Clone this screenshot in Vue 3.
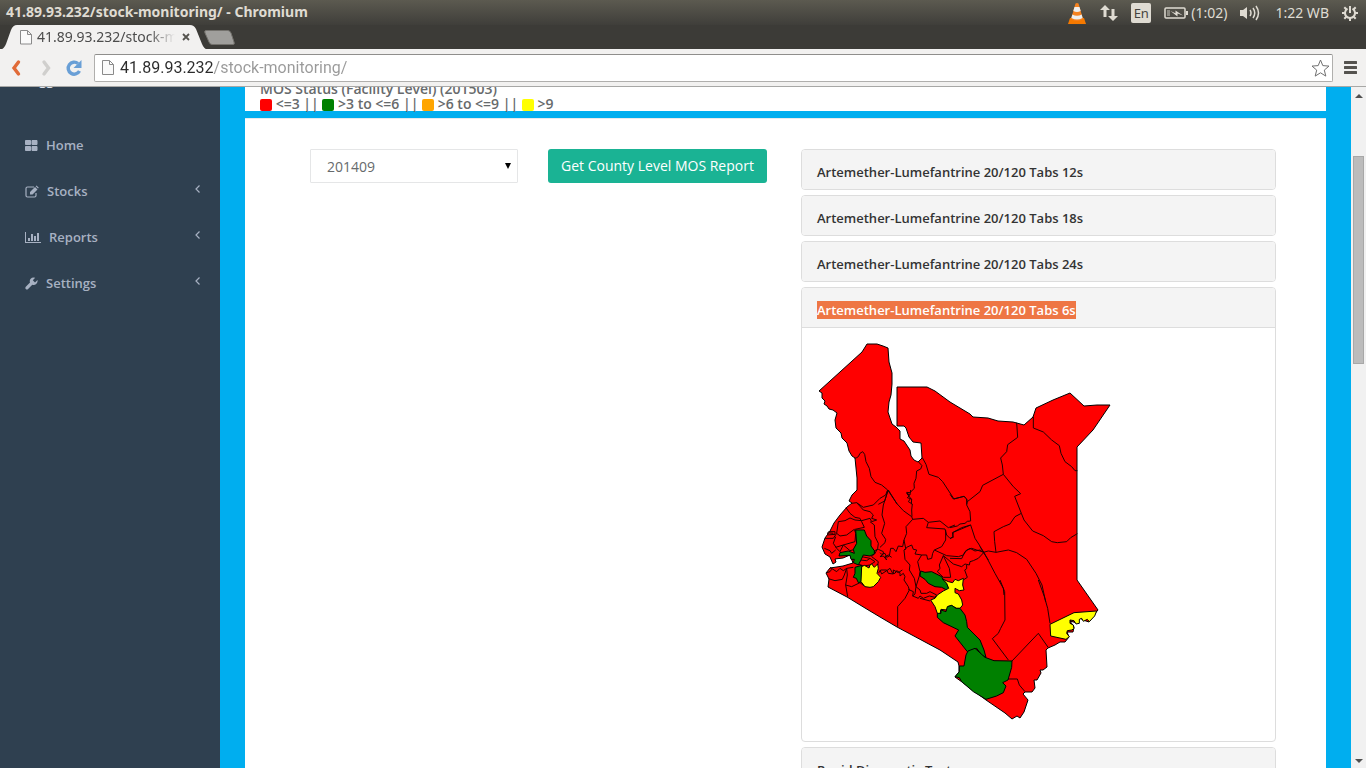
<script setup>
import { ref } from 'vue'

const address = ref('41.89.93.232/stock-monitoring/')
const period = ref('201409')

const menu = [
  { label: 'Home', icon: 'grid', width: 13, children: false },
  { label: 'Stocks', icon: 'edit', width: 14, children: true },
  { label: 'Reports', icon: 'chart', width: 16, children: true },
  { label: 'Settings', icon: 'wrench', width: 13, children: true },
]

const legend = [
  { tone: 'low', text: '<=3' },
  { tone: 'good', text: '>3 to <=6' },
  { tone: 'high', text: '>6 to <=9' },
  { tone: 'over', text: '>9' },
]

const products = [
  { name: 'Artemether-Lumefantrine 20/120 Tabs 12s', open: false },
  { name: 'Artemether-Lumefantrine 20/120 Tabs 18s', open: false },
  { name: 'Artemether-Lumefantrine 20/120 Tabs 24s', open: false },
  { name: 'Artemether-Lumefantrine 20/120 Tabs 6s', open: true },
  { name: 'Rapid Diagnostic Tests', open: false },
]

const country =
  '867,344 877,344 883,346 888,348 889,362 892,373 892,384 891,395 889,402 888,412 892,424 896,427 900,431 900,439 904,441 910,450 911,456 914,460 918,462 922,458 921,443 913,442 909,437 906,428 904,426 897,426 897,387 927,387 935,391 950,402 970,414 973,417 988,418 998,421 1013,422 1024,425 1033,417 1036,408 1053,400 1070,393 1084,406 1097,405 1110,405 1093,430 1077,447 1077,580 1098,610 1092,617 1089,622 1083,620 1080,618 1077,623 1070,621 1074,627 1073,632 1067,632 1069,637 1065,642 1060,642 1055,645 1048,648 1046,650 1047,667 1043,670 1040,670 1041,673 1037,680 1034,680 1035,688 1032,692 1025,692 1023,694 1028,700 1024,712 1020,718 1017,716 1012,719 1005,713 986,700 962,682 955,677 959,672 959,666 958,662 940,650 897,627 880,617 865,608 847,597 828,587 829,579 826,573 830,568 843,566 853,563 850,555 843,558 835,559 836,562 833,564 830,557 825,554 822,547 825,538 830,531 834,523 840,515 847,507 852,503 849,501 852,495 857,490 857,478 855,458 852,456 849,451 847,443 842,438 841,433 836,428 835,420 837,413 833,410 829,409 827,406 824,404 825,401 822,398 822,393 819,391 862,352'

// Each sheet holds borders traced at three units to the pixel from its own origin.
const sheets = [
  {
    x: 810,
    y: 335,
    lines: [
      '134,370 140,368 145,365 150,355 158,350 164,358 168,380 178,400 183,425 195,442 215,450 233,465 262,508',
      '233,465 228,485 224,498 205,508',
      '325,380 336,392 332,402 320,408 318,430 312,445 313,460 300,473 290,472 298,482 292,488 305,492 304,508',
      '337,368 348,388 357,418 385,427 398,440 432,492 462,484 470,492 470,508',
    ],
  },
  {
    x: 950,
    y: 370,
    lines: [
      '200,158 203,202 173,224 170,245 152,264 157,285 160,313 98,346 90,365 52,395',
      '0,373 10,387 42,379 50,387 52,395 50,405 60,425 62,453 52,454 45,460 30,462 22,468 0,473',
      '250,140 250,174 280,186 305,210 328,227 333,250 345,275 365,290 375,302 382,302',
      '160,313 190,350 212,371 194,379 214,430 222,450 248,483 280,497 305,515 322,518 350,515 362,503 382,491',
      '214,430 195,440 180,462 160,470 132,485 134,515 138,547',
      '62,465 10,487 8,500 0,507',
      '62,465 75,505 88,525 100,547 115,570',
      '0,565 35,566 45,545 60,535 75,543 90,540 100,547 115,543 138,547 175,540 200,548 230,568 258,610 276,645 287,695',
    ],
  },
  {
    x: 880,
    y: 490,
    lines: [
      '25,0 50,40 70,62 95,80 98,88 130,85 145,97 180,93 205,113 225,105',
      '92,0 90,15 80,10 92,25 85,35 97,42 95,60 96,80',
      '140,113 145,97',
      '140,113 195,117 200,135 210,145 220,142 217,128 245,113 272,105',
      '300,170 312,187 345,250 370,295 372,315',
      '197,120 197,150 185,170 163,180',
      '98,88 78,110 80,130 72,150 77,175 72,180 75,208 90,225 88,240 103,265 108,290 105,312 98,318',
      '72,150 68,170 55,168 48,185 40,175 32,175 28,198 20,202 15,190 5,193 0,188',
      '25,0 10,45 6,75 14,100 5,130 17,148 15,158 0,172',
      '75,180 80,172 95,165 100,178 110,180 105,192 125,195 140,195 143,208 155,205 158,190 163,180 200,197 235,200 250,195 260,180 275,175 290,180 312,187',
      '312,187 295,205 280,212 270,215 268,225 255,222 245,230 220,222 190,197',
      '190,197 178,225 180,235 172,245 190,262 212,262 208,235 190,197',
      '260,225 260,236 254,240 262,262 250,270',
      '125,195 113,215 120,245 118,258 108,290 120,300 123,310 140,310 150,305 170,315 165,322 148,318 130,325 120,318 115,325 98,318 100,305 85,298',
      '120,325 150,333',
      '0,240 5,252 20,242 30,235 38,250 45,250 50,242 60,248 60,258 70,250 75,260 72,270 85,290 88,300 75,325 53,350 53,410',
    ],
  },
  {
    x: 815,
    y: 490,
    lines: [
      '218,0 212,15 195,25 175,45 145,52 125,38 110,40',
      '93,53 105,70 120,82 135,85 140,95 148,112 120,118',
      '125,38 145,60 165,65 175,75 170,85 185,90 170,95 165,85 140,92 120,90 105,84 90,92 70,95',
      '165,95 178,105 180,140 190,160 188,175 180,190',
      '70,95 65,130 75,138 95,135 118,118 122,130 120,155 85,165 62,172',
      '40,125 60,125 60,133 38,135 38,128 55,130',
      '65,130 55,145 30,145',
      '62,140 55,160 65,175 75,185 85,165 105,182 120,178',
      '28,175 45,182 50,190 62,180',
      '45,232 65,245 75,235 85,242 95,235 115,232',
      '95,235 88,255 82,268 60,272 40,266',
      '95,235 97,255 92,285 98,320',
      '92,285 110,290 135,278 150,290',
      '140,200 165,205 180,215 165,225 145,228 130,222',
      '135,210 155,212 165,205',
      '180,190 178,182 190,178 205,185 205,192 195,200 205,198 215,210 210,200 220,195 230,202',
      '180,190 170,200 190,215 188,225',
      '190,250 197,240 215,240 220,250 235,252 235,240 250,248 262,240',
      '35,248 45,245 50,238',
    ],
  },
  {
    x: 880,
    y: 580,
    lines: [
      '360,0 374,35 375,120 362,145 355,160 337,176 385,240',
      '475,0 493,50 503,85 510,130',
      '396,243 475,160 505,203',
      '384,297 412,297 418,315 435,335',
    ],
  },
]

const shaded = [
  {
    x: 880,
    y: 490,
    areas: [
      { tone: 'good', points: '122,243 135,247 155,245 185,260 190,270 200,280 206,295 200,300 185,292 165,290 145,280 135,268 120,258' },
      { tone: 'over', points: '188,267 205,275 218,278 225,268 235,272 250,265 248,285 252,300 238,302 225,295 225,308 235,312 245,330 248,345 240,355 230,355 215,347 205,349 200,360 183,358 180,372 172,370 165,350 152,330 165,325 172,315 190,303 206,295 200,280' },
    ],
  },
  {
    x: 880,
    y: 580,
    areas: [
      { tone: 'good', points: '172,100 183,100 183,90 198,95 202,80 215,76 228,85 240,85 255,105 260,125 262,142 285,165 300,180 312,210 318,232 305,225 290,205 262,215 225,168 236,150 190,128 172,112' },
      { tone: 'good', points: '285,205 315,232 342,242 396,243 395,262 384,300 368,308 378,318 370,338 350,348 318,358 280,335 245,305 238,293 225,290 238,275 238,258 252,258 258,225 264,213' },
      { tone: 'over', points: '650,93 644,108 628,125 622,118 610,124 605,115 598,118 598,130 588,132 582,122 570,120 570,130 580,135 582,146 575,150 562,152 560,160 568,170 558,178 512,168 510,133 582,98' },
    ],
  },
  {
    x: 815,
    y: 490,
    areas: [
      { tone: 'good', points: '122,120 148,120 155,138 168,152 168,168 178,182 178,192 165,198 145,195 138,210 130,225 115,218 118,208 108,208 105,196 72,198 75,188 100,183 118,190 115,178 125,160' },
      { tone: 'good', points: '120,232 140,226 140,275 130,278 124,265 115,262 120,250' },
      { tone: 'over', points: '140,230 148,226 162,234 165,225 170,222 178,232 188,222 190,235 186,250 197,262 190,275 175,290 165,292 150,290 138,275' },
    ],
  },
]
</script>

<template>
  <div class="screen">
    <header class="titlebar">
      <span class="window-title">41.89.93.232/stock-monitoring/ - Chromium</span>
      <div class="tray">
        <svg class="cone" width="20" height="22" viewBox="0 0 20 22" aria-hidden="true">
          <path d="M3 16h14l2 6H1z" fill="#f57900" />
          <path d="M8.500 1.500Q10 .5 11.500 1.500L16 17Q10 21 4 17z" fill="#f58220" />
          <path d="M7.500 5h5l1.200 4Q10 11 6.300 9zM5.300 12.500Q10 15 14.700 12.500L15.600 16Q10 19 4.400 16z" fill="#eee" />
        </svg>
        <svg class="net" width="18" height="18" viewBox="0 0 18 18" aria-hidden="true">
          <path d="M5 1L0 6h3.500v7h3V6H10zM13 17l5-5h-3.500V5h-3v7H8z" fill="#dfdbd2" />
        </svg>
        <span class="lang">En</span>
        <svg class="battery" width="24" height="12" viewBox="0 0 24 12" aria-hidden="true">
          <rect x="1" y="1" width="20" height="10" rx="1" fill="none" stroke="#dfdbd2" stroke-width="1.500" />
          <path d="M22 4h2v4h-2z" fill="#dfdbd2" />
          <path d="M3 3h3v6H3z" fill="#8b8981" />
          <path d="M6.500 4l5 2.200V3.500L19 8.500l-5.500-2v3z" fill="#dfdbd2" />
        </svg>
        <span class="remaining">(1:02)</span>
        <svg class="sound" width="21" height="18" viewBox="0 0 21 18" aria-hidden="true">
          <path d="M1 6h3l4-3v12l-4-3H1z" fill="#dfdbd2" />
          <path d="M11 6q2 3 0 6M14 4q3.500 5 0 10M17 2q5 7 0 14" fill="none" stroke="#dfdbd2" stroke-width="1.500" />
        </svg>
        <span class="clock">1:22 WB</span>
        <svg class="gear" width="16" height="16" viewBox="0 0 16 16" aria-hidden="true">
          <path d="M5.500 3.700a5 5 0 1 0 5 0M8 1v7" fill="none" stroke="#dfdbd2" stroke-width="2" />
          <path d="M8 13v3M0 8h3M13 8h3M2.300 2.300l2 2M13.700 2.300l-2 2M2.300 13.700l2-2M13.700 13.700l-2-2" stroke="#dfdbd2" stroke-width="2" />
        </svg>
      </div>
    </header>

    <nav class="tabs" aria-label="Tabs">
      <div class="tab">
        <svg class="tab-shape" viewBox="0 0 208 25" width="208" height="25" aria-hidden="true">
          <path d="M0 25Q4 24 6 19L11 5Q13 0 17 0H190Q194 0 196 4L202 19Q204 24 208 25z" fill="#f2f1f0" />
        </svg>
        <svg class="page-icon" width="12" height="15" viewBox="0 0 12 15" aria-hidden="true">
          <path d="M.5.5h7l4 4v9.500H.5zM7.500.5v4h4" fill="#fafafa" stroke="#8a8a8a" />
        </svg>
        <span class="tab-title">41.89.93.232/stock-m</span>
        <button class="close" type="button" aria-label="Close tab">
          <svg width="8" height="8" viewBox="0 0 8 8"><path d="M1 1l6 6M7 1L1 7" stroke="#55534e" stroke-width="1.800" /></svg>
        </button>
      </div>
      <button class="new-tab" type="button" aria-label="New tab">
        <svg width="31" height="15" viewBox="0 0 31 15"><path d="M2 .5h22q2 0 3 2.500l3 9q1 2.500-1 2.500H8q-2 0-3-2.500L1 3Q0 .5 2 .5z" fill="#a09f9c" stroke="#74726d" /></svg>
      </button>
    </nav>

    <div class="toolbar">
      <button class="tool" type="button" aria-label="Back">
        <svg width="12" height="18" viewBox="0 0 12 18"><path d="M8.500 3L4 9l4.500 6" fill="none" stroke="#e16b38" stroke-width="3.400" stroke-linecap="round" /></svg>
      </button>
      <button class="tool" type="button" aria-label="Forward">
        <svg width="12" height="18" viewBox="0 0 12 18"><path d="M4 3l4.500 6L4 15" fill="none" stroke="#d0cfcd" stroke-width="3.400" stroke-linecap="round" /></svg>
      </button>
      <button class="tool" type="button" aria-label="Reload">
        <svg width="18" height="18" viewBox="0 0 18 18">
          <path d="M13 4.500A6 6 0 1 0 14.500 12" fill="none" stroke="#699fd6" stroke-width="3.400" />
          <path d="M16.500 1v8H8.500z" fill="#699fd6" />
        </svg>
      </button>
      <div class="omnibox">
        <svg class="page-icon" width="12" height="15" viewBox="0 0 12 15" aria-hidden="true">
          <path d="M.5.5h7l4 4v10H.5zM7.500.5v4h4" fill="#fafafa" stroke="#8a8a8a" />
        </svg>
        <input v-model="address" class="address" type="text" aria-label="Address" spellcheck="false" />
        <button class="star" type="button" aria-label="Bookmark">
          <svg width="19" height="18" viewBox="0 0 19 18"><path d="M9.500 1l2.300 5.600 6.200.5-4.700 4 1.500 6-5.300-3.300-5.300 3.300 1.500-6-4.700-4 6.200-.5z" fill="none" stroke="#6f6f6f" stroke-linejoin="round" /></svg>
        </button>
      </div>
      <button class="burger" type="button" aria-label="Menu">
        <svg width="13" height="13" viewBox="0 0 13 13"><path d="M1 1.500h11M1 6.500h11M1 11.500h11" stroke="#55534f" stroke-width="3" stroke-linecap="round" /></svg>
      </button>
    </div>

    <div class="page">
      <aside class="sidebar">
        <div class="profile"><span>gg</span></div>
        <nav aria-label="Main">
          <a v-for="item in menu" :key="item.label" class="item" href="#">
            <svg :width="item.width" height="13" :viewBox="`0 0 ${item.width} 13`" aria-hidden="true">
              <path v-if="item.icon === 'grid'" d="M.5 1.500h5v4h-5zM7 1.500h5v4H7zM.5 7.500h5v4h-5zM7 7.500h5v4H7z" fill="currentColor" stroke="currentColor" stroke-linejoin="round" />
              <template v-else-if="item.icon === 'edit'">
                <path d="M9 2H2.500Q1 2 1 3.500v7Q1 12 2.500 12h7q1.500 0 1.500-1.500V8" fill="none" stroke="currentColor" stroke-width="1.200" />
                <path d="M5 9.500V7l5-5 2.500 2.500-5 5zM10.700 1.300l.8-.8 2.300 2.300-.8.8z" fill="currentColor" />
              </template>
              <path v-else-if="item.icon === 'chart'" d="M0 1h1v10h15v1H0zM3 7h2v3H3zM6 3h2v7H6zM9 5h2v5H9zM12 2h2v8h-2z" fill="currentColor" />
              <path v-else d="M12.500 3L10 5.500 7.800 3.300 10.200.8Q7.500-.2 5.700 1.700 4.300 3.200 5 5.500L.8 9.700Q-.2 11 .8 12t2.300 0L7.300 7.800q2.200.8 3.900-.8Q13 5.200 12.500 3z" fill="currentColor" />
            </svg>
            <span class="item-label">{{ item.label }}</span>
            <svg v-if="item.children" class="chevron" width="5" height="8" viewBox="0 0 5 8" aria-hidden="true"><path d="M4.500.5L1 4l3.500 3.500" fill="none" stroke="currentColor" stroke-width="1.200" /></svg>
          </a>
        </nav>
      </aside>

      <main class="content">
        <section class="status">
          <h1>MOS Status (Facility Level) (201503)</h1>
          <p class="legend">
            <template v-for="(entry, i) in legend" :key="entry.tone"><template v-if="i"> || </template><span :class="['swatch', entry.tone]"></span> {{ entry.text }}</template>
          </p>
        </section>

        <section class="report">
          <div class="picker">
            <select v-model="period" aria-label="Period">
              <option>201409</option>
            </select>
            <svg class="arrow" width="6" height="6" viewBox="0 0 6 6" aria-hidden="true"><path d="M0 0h6L3 6z" fill="#000" /></svg>
          </div>
          <div>
            <button class="submit" type="button">Get County Level MOS Report</button>
          </div>
          <div class="panels">
            <article v-for="product in products" :key="product.name" class="panel">
              <h2 :class="{ opened: product.open }"><a href="#"><span :class="{ selected: product.open }">{{ product.name }}</span></a></h2>
              <div v-if="product.open" class="map">
                <svg viewBox="816 343 300 380" width="300" height="380" role="img" aria-label="County map">
                  <polygon class="county low" :points="country" />
                  <g v-for="(sheet, s) in sheets" :key="s" :transform="`translate(${sheet.x} ${sheet.y}) scale(0.33333)`">
                    <polyline v-for="line in sheet.lines" :key="line" class="border" :points="line" />
                  </g>
                  <g v-for="(sheet, s) in shaded" :key="'a' + s" :transform="`translate(${sheet.x} ${sheet.y}) scale(0.33333)`">
                    <polygon v-for="area in sheet.areas" :key="area.points" :class="['county', 'traced', area.tone]" :points="area.points" />
                  </g>
                </svg>
              </div>
            </article>
          </div>
        </section>
      </main>

      <div class="scrollbar" aria-hidden="true">
        <svg width="8" height="4" viewBox="0 0 8 4"><path d="M0 4h8L4 0z" fill="#505050" /></svg>
        <div class="thumb"></div>
        <svg class="down" width="8" height="4" viewBox="0 0 8 4"><path d="M0 0h8L4 4z" fill="#505050" /></svg>
      </div>
    </div>
  </div>
</template>

<style>
html,
body {
  overflow: hidden;
}
</style>

<style scoped>
.screen {
  display: flex;
  flex-direction: column;
  height: 100vh;
  overflow: hidden;
  background: #3c3b37;
  color: #676a6c;
  font-family: "Open Sans", "Noto Sans", sans-serif;
}
.screen * {
  box-sizing: border-box;
}
button {
  display: block;
  padding: 0;
  border: 0;
  background: none;
  font-family: inherit;
}
svg {
  display: block;
  flex: none;
}
a {
  color: inherit;
  text-decoration: none;
}

.titlebar {
  display: flex;
  flex: none;
  justify-content: space-between;
  height: 25px;
  padding: 0 8px 0 6px;
  background: linear-gradient(#5c5a50, #3f3e3a);
  color: #dfdbd2;
  font-family: "Noto Sans", sans-serif;
  font-size: 14px;
  line-height: 24px;
}
.window-title {
  font-weight: 700;
}
.tray {
  display: flex;
  align-items: center;
}
.net {
  margin-left: 13px;
}
.lang {
  width: 20px;
  height: 20px;
  margin-left: 13px;
  border-radius: 2px;
  background: #dfdbd2;
  color: #45433e;
  font-size: 13px;
  line-height: 20px;
  text-align: center;
}
.battery {
  margin-left: 13px;
}
.remaining {
  margin-left: 3px;
}
.sound {
  margin-left: 12px;
}
.clock {
  margin-left: 15px;
}
.gear {
  margin-left: 13px;
}

.tabs {
  display: flex;
  flex: none;
  height: 24px;
}
.tab {
  position: relative;
  display: flex;
  align-items: center;
  width: 208px;
  padding-left: 20px;
  color: #4c4c4c;
}
.tab-shape {
  position: absolute;
  top: 0;
  left: 0;
}
.tab .page-icon,
.tab-title,
.close {
  position: relative;
}
.tab-title {
  width: 138px;
  margin-left: 5px;
  overflow: hidden;
  font-family: "Noto Sans", sans-serif;
  font-size: 14px;
  line-height: 20px;
  white-space: nowrap;
  mask-image: linear-gradient(to right, #000 112px, transparent);
}
.close {
  margin-left: 7px;
}
.new-tab {
  margin: 5px 0 0 -4px;
  align-self: flex-start;
}

.toolbar {
  display: flex;
  flex: none;
  align-items: center;
  height: 38px;
  padding: 0 9px;
  border-bottom: 1px solid #a8a8a6;
  background: #f2f1f0;
}
.tool {
  width: 30px;
}
.tool:first-child {
  margin-left: 1px;
}
.tool:nth-child(3) {
  width: 25px;
  margin-left: -5px;
}
.omnibox {
  display: flex;
  flex: 1;
  align-items: center;
  height: 28px;
  margin-left: 4px;
  padding: 0 2px 0 7px;
  border: 1px solid #b0afad;
  border-top-color: #8f8e8c;
  border-radius: 2px;
  background: #fff;
}
.address {
  flex: 1;
  min-width: 0;
  height: 24px;
  margin-left: 6px;
  padding: 0;
  border: 0;
  outline: 0;
  background: linear-gradient(to right, #2b2b2b 93px, #999 93px);
  background-clip: text;
  -webkit-text-fill-color: transparent;
  font-family: Roboto, "Noto Sans", sans-serif;
  font-size: 16px;
  line-height: 24px;
}
.burger {
  margin-left: 11px;
}

.page {
  display: flex;
  flex: 1;
  min-height: 0;
  overflow: hidden;
  background: #00aeef;
}
.sidebar {
  flex: none;
  width: 220px;
  background: #2f4050;
  color: #a7b1c2;
  font-size: 13px;
  font-weight: 600;
}
.profile {
  height: 35px;
  padding-left: 39px;
  overflow: hidden;
  color: #dfe4ed;
}
.profile span {
  display: block;
  margin-top: -14px;
  line-height: 14px;
}
.item {
  display: flex;
  align-items: center;
  height: 46px;
  padding: 0 20px 0 25px;
}
.item-label {
  flex: 1;
  margin-left: 8px;
}
.chevron {
  margin-bottom: 4px;
}

.content {
  flex: 1;
  min-width: 0;
  margin: 0 25px;
}
.status {
  display: flow-root;
  height: 24px;
  padding: 0 15px;
  background: #fff;
  font-size: 14px;
  font-weight: 600;
  line-height: 15px;
  white-space: nowrap;
}
.status h1 {
  margin: -6px 0 0;
  font-size: 14px;
  font-weight: 600;
}
.legend {
  margin: 0;
}
.swatch {
  display: inline-block;
  width: 12px;
  height: 12px;
  border-radius: 2px;
  vertical-align: -2px;
}
.swatch.low {
  background: #f00;
}
.swatch.good {
  background: #008000;
}
.swatch.high {
  background: #ffa500;
}
.swatch.over {
  background: #ff0;
}
.report {
  display: grid;
  grid-template-columns: 208fr 223fr 475fr;
  gap: 30px;
  margin-top: 7px;
  padding: 30px 50px 30px 65px;
  border-top: 1px solid #e7eaec;
  background: #fff;
}
.picker {
  position: relative;
  height: 34px;
}
.picker select {
  width: 100%;
  height: 34px;
  padding: 0 16px;
  border: 1px solid #e5e6e7;
  border-radius: 1px;
  appearance: none;
  background: #fff;
  color: #676a6c;
  font-family: inherit;
  font-size: 14px;
}
.arrow {
  position: absolute;
  top: 14px;
  right: 7px;
}
.submit {
  height: 34px;
  padding: 0 13px 2px;
  border-radius: 3px;
  background: #1ab394;
  color: #fff;
  font-size: 14px;
  white-space: nowrap;
}
.panels {
  display: flex;
  flex-direction: column;
  gap: 5px;
}
.panel {
  border: 1px solid #ddd;
  border-radius: 4px;
  overflow: hidden;
}
.panel h2 {
  margin: 0;
  padding: 13px 15px 8px;
  background: #f4f4f4;
  color: #333;
  font-size: 13px;
  font-weight: 600;
  line-height: 18px;
}
.panel h2.opened {
  border-bottom: 1px solid #ddd;
}
.selected {
  display: inline-block;
  background: #ee7644;
  color: #fff;
}
.map {
  padding: 15px 14px 18px;
}
.county {
  stroke: #000;
  stroke-width: 1;
  stroke-linejoin: round;
}
.county.traced {
  stroke-width: 3;
}
.county.low {
  fill: #f00;
}
.county.good {
  fill: #008000;
}
.county.over {
  fill: #ff0;
}
.border {
  fill: none;
  stroke: #200;
  stroke-width: 3;
  stroke-linejoin: round;
}

.scrollbar {
  display: flex;
  flex: none;
  flex-direction: column;
  align-items: center;
  width: 15px;
  padding: 7px 0 5px;
  background: #f1f1f1;
}
.thumb {
  width: 11px;
  height: 208px;
  margin-top: 58px;
  border: 1px solid #a8a8a8;
  background: #bcbcbc;
}
.down {
  margin-top: auto;
}
</style>
